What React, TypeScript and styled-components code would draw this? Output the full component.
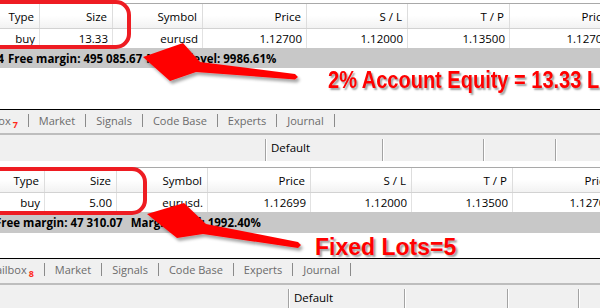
import React from "react";
import styled, { createGlobalStyle } from "styled-components";

const Global = createGlobalStyle`
  *, *::before, *::after { box-sizing: border-box; }
  html, body { margin: 0; padding: 0; background: #ffffff; }
  body {
    width: 600px;
    height: 308px;
    overflow: hidden;
    font-family: "Open Sans", "Noto Sans", sans-serif;
  }
`;

const Page = styled.div`
  position: relative;
  width: 600px;
  height: 308px;
  overflow: hidden;
  display: flex;
  flex-direction: column;
  background: #ffffff;
`;

const Panel = styled.section<{ $gap: number }>`
  display: flex;
  flex-direction: column;
  padding-top: ${(p) => p.$gap}px;
`;

const Grid = styled.div<{ $cols: string; $shift: number }>`
  display: grid;
  grid-template-columns: ${(p) => p.$cols};
  margin-left: ${(p) => p.$shift}px;
  width: max-content;
`;

const HeaderRow = styled(Grid)`
  border-top: 1px solid #a9a9a9;
  border-bottom: 1px solid #d2d2d2;
`;

const HeadCell = styled.div`
  height: 24px;
  display: flex;
  align-items: center;
  justify-content: flex-end;
  padding-right: 5px;
  background: linear-gradient(to bottom, #ffffff 0%, #ffffff 48%, #f2f2f2 100%);
  border-right: 1px solid #dddddd;
  font-size: 11.5px;
  color: #000000;
  white-space: nowrap;
`;

const DataCell = styled.div`
  height: 19px;
  display: flex;
  align-items: center;
  justify-content: flex-end;
  padding-right: 4px;
  background: #ffffff;
  border-right: 1px solid #e2e2e2;
  font-size: 11.5px;
  color: #000000;
  white-space: nowrap;
`;

const StatusBar = styled.div<{ $indent: number; $height: number; $gap: number }>`
  height: ${(p) => p.$height}px;
  display: flex;
  align-items: center;
  gap: ${(p) => p.$gap}px;
  background: #c8c8c8;
  font-size: 11.5px;
  font-weight: 700;
  color: #000000;
  white-space: nowrap;
  & > :first-child {
    margin-left: ${(p) => p.$indent}px;
  }
`;

const StatusLead = styled.span<{ $width: number }>`
  display: flex;
  justify-content: flex-end;
  width: ${(p) => p.$width}px;
  overflow: hidden;
  flex: none;
`;

const NoteArea = styled.div<{ $height: number; $indent: number; $top: number }>`
  height: ${(p) => p.$height}px;
  padding-left: ${(p) => p.$indent}px;
  padding-top: ${(p) => p.$top}px;
  background: #ffffff;
  white-space: nowrap;
`;

const NoteText = styled.span<{ $size: number; $squeeze: number }>`
  display: inline-block;
  font-family: "Liberation Sans", Arial, sans-serif;
  font-weight: 700;
  font-size: ${(p) => p.$size}px;
  line-height: 1;
  color: #ff0000;
  text-shadow: 2px 2px 2px rgba(0, 0, 0, 0.38);
  transform: scaleX(${(p) => p.$squeeze});
  transform-origin: left top;
`;

const TabBar = styled.div<{ $indent: number; $height: number }>`
  height: ${(p) => p.$height}px;
  display: flex;
  align-items: center;
  padding-bottom: 3px;
  border-top: 1px solid #000000;
  background: #f0f0f0;
  white-space: nowrap;
  & > :first-child {
    margin-left: ${(p) => p.$indent}px;
  }
`;

const Tab = styled.span`
  padding: 0 10px;
  font-size: 11px;
  color: #6b6b6b;
  display: flex;
  align-items: baseline;
  flex: none;
`;

const Badge = styled.span`
  margin-left: 2px;
  font-size: 9px;
  font-weight: 700;
  color: #ff2a1a;
  position: relative;
  top: 3px;
`;

const TabSep = styled.span`
  width: 1px;
  height: 13px;
  background: #8a8a8a;
  flex: none;
`;

const DefaultBar = styled.div<{ $indent: number; $height: number; $top: number }>`
  height: ${(p) => p.$height}px;
  display: flex;
  padding-left: ${(p) => p.$indent}px;
  padding-top: ${(p) => p.$top}px;
  border-top: 2px solid #bdbdbd;
  background: #f0f0f0;
  white-space: nowrap;
`;

const DefCell = styled.div<{ $width: number }>`
  width: ${(p) => p.$width}px;
  flex: none;
  padding: 1px 0 0 5px;
  line-height: 16px;
  border-left: 1px solid #a3a3a3;
  box-shadow: inset 1px 0 0 #ffffff;
  font-size: 11.5px;
  color: #000000;
`;

const Frame = styled.div<{ $left: number; $top: number; $width: number; $height: number }>`
  position: absolute;
  left: ${(p) => p.$left}px;
  top: ${(p) => p.$top}px;
  width: ${(p) => p.$width}px;
  height: ${(p) => p.$height}px;
  border: 4px solid #ee1c22;
  border-radius: 15px;
  pointer-events: none;
`;

const Overlay = styled.svg`
  position: absolute;
  left: 0;
  top: 0;
  width: 600px;
  height: 308px;
  pointer-events: none;
`;

type Col = { label: string; value: string; width: number };

const topCols: Col[] = [
  { label: "Order", value: "61544207", width: 80 },
  { label: "Type", value: "buy", width: 60 },
  { label: "Size", value: "13.33", width: 73 },
  { label: "Symbol", value: "eurusd", width: 90 },
  { label: "Price", value: "1.12700", width: 104 },
  { label: "S / L", value: "1.12000", width: 101 },
  { label: "T / P", value: "1.13500", width: 102 },
  { label: "Price", value: "1.12700", width: 104 },
];

const bottomCols: Col[] = [
  { label: "Order", value: "61544208", width: 80 },
  { label: "Type", value: "buy", width: 60 },
  { label: "Size", value: "5.00", width: 72 },
  { label: "Symbol", value: "eurusd.", width: 91 },
  { label: "Price", value: "1.12699", width: 103 },
  { label: "S / L", value: "1.12000", width: 101 },
  { label: "T / P", value: "1.13500", width: 101 },
  { label: "Price", value: "1.12700", width: 104 },
];

const Table: React.FC<{ cols: Col[]; shift: number }> = ({ cols, shift }) => {
  const template = cols.map((c) => `${c.width}px`).join(" ");
  return (
    <>
      <HeaderRow $cols={template} $shift={shift}>
        {cols.map((c, i) => (
          <HeadCell key={i}>{c.label}</HeadCell>
        ))}
      </HeaderRow>
      <Grid $cols={template} $shift={shift}>
        {cols.map((c, i) => (
          <DataCell key={i}>{c.value}</DataCell>
        ))}
      </Grid>
    </>
  );
};

const tabNames = ["Market", "Signals", "Code Base", "Experts", "Journal"];

const Tabs: React.FC<{ indent: number; height: number; badge: string }> = ({ indent, height, badge }) => (
  <TabBar $indent={indent} $height={height}>
    <Tab>
      Mailbox<Badge>{badge}</Badge>
    </Tab>
    {tabNames.map((n) => (
      <React.Fragment key={n}>
        <TabSep />
        <Tab>{n}</Tab>
      </React.Fragment>
    ))}
    <TabSep />
  </TabBar>
);

const Defaults: React.FC<{ indent: number; height: number; top: number; widths: number[] }> = ({
  indent,
  height,
  top,
  widths,
}) => (
  <DefaultBar $indent={indent} $height={height} $top={top}>
    {widths.map((w, i) => (
      <DefCell key={i} $width={w}>
        {i === 0 ? "Default" : ""}
      </DefCell>
    ))}
  </DefaultBar>
);

type P = [number, number];
const pts = (list: P[]) => list.map((p) => p.join(",")).join(" ");

const topArrow: P[] = [
  [143, 57],
  [183, 43],
  [200, 62],
  [295, 74],
  [298, 77],
  [295, 79.5],
  [196, 72],
  [170, 81],
];

const bottomArrow: P[] = [
  [147, 214],
  [184, 203],
  [206, 224],
  [298, 242],
  [301, 245],
  [298, 248],
  [203, 234],
  [177, 238],
];

export default function App() {
  return (
    <Page>
      <Global />
      <Panel $gap={3}>
        <Table cols={topCols} shift={-100} />
        <StatusBar $indent={-20} $height={20} $gap={4}>
          <StatusLead $width={24}>
            <span>Equity: 500 166.24</span>
          </StatusLead>
          <span>Free margin: 495 085.67</span>
          <span>Margin level: 9986.61%</span>
        </StatusBar>
        <NoteArea $height={41} $indent={328} $top={1}>
          <NoteText $size={23} $squeeze={0.87}>
            2% Account Equity = 13.33 Lots
          </NoteText>
        </NoteArea>
        <Tabs indent={-40} height={24} badge="7" />
        <Defaults indent={265} height={28} top={4} widths={[117, 101, 72, 60]} />
      </Panel>
      <Panel $gap={6}>
        <Table cols={bottomCols} shift={-95} />
        <StatusBar $indent={-5} $height={21} $gap={8}>
          <span>Free margin: 47 310.07</span>
          <span>Margin level: 1992.40%</span>
        </StatusBar>
        <NoteArea $height={25} $indent={315} $top={3}>
          <NoteText $size={23} $squeeze={1}>
            Fixed Lots=5
          </NoteText>
        </NoteArea>
        <Tabs indent={-24} height={25} badge="8" />
        <Defaults indent={288} height={25} top={4} widths={[116, 103, 71, 60]} />
      </Panel>

      <Frame $left={-30} $top={0} $width={161} $height={49} />
      <Frame $left={-30} $top={167} $width={177} $height={48} />

      <Overlay viewBox="0 0 600 308">
        <defs>
          <filter id="arrowShadow" x="-20%" y="-40%" width="140%" height="180%">
            <feDropShadow dx="2" dy="3" stdDeviation="1.6" floodColor="#000000" floodOpacity="0.35" />
          </filter>
        </defs>
        <polygon points={pts(topArrow)} fill="#ff0000" filter="url(#arrowShadow)" />
        <polygon points={pts(bottomArrow)} fill="#ff0000" filter="url(#arrowShadow)" />
      </Overlay>
    </Page>
  );
}
